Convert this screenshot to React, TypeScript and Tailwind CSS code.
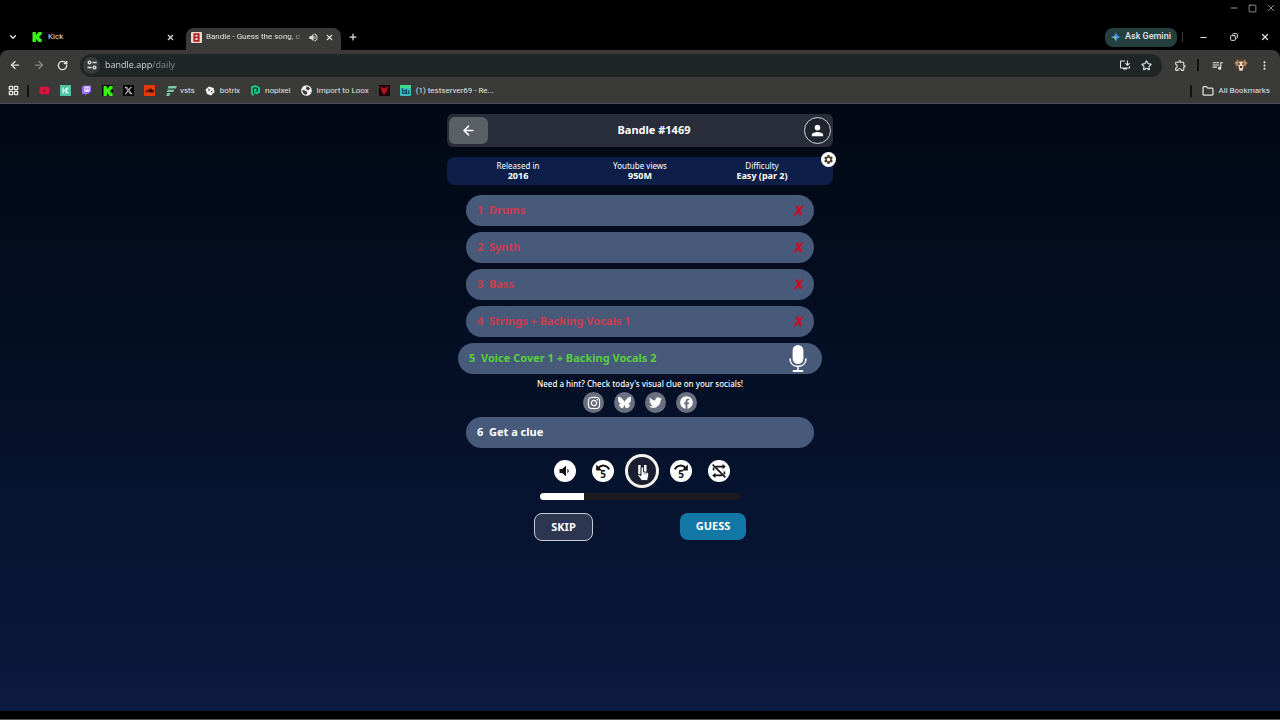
import React from "react";
import {
  ArrowLeft,
  ArrowRight,
  ChevronDown,
  Copy,
  Folder,
  LayoutGrid,
  Minus,
  Plus,
  RotateCw,
  Square,
  Star,
  X,
} from "lucide-react";
import {
  FaFacebook,
  FaInstagram,
  FaSoundcloud,
  FaTwitter,
  FaYoutube,
} from "react-icons/fa";
import { FaBluesky, FaXTwitter } from "react-icons/fa6";
import {
  MdInstallDesktop,
  MdMoreVert,
  MdOutlineExtension,
  MdPerson,
  MdQueueMusic,
  MdSettings,
  MdVolumeUp,
} from "react-icons/md";

const instruments = [
  { number: 1, name: "Drums" },
  { number: 2, name: "Synth" },
  { number: 3, name: "Bass" },
  { number: 4, name: "Strings + Backing Vocals 1" },
];

const facts = [
  { label: "Released in", value: "2016" },
  { label: "Youtube views", value: "950M" },
  { label: "Difficulty", value: "Easy (par 2)" },
];

const socials = [
  { label: "Instagram", icon: <FaInstagram size={14} /> },
  { label: "Bluesky", icon: <FaBluesky size={13} /> },
  { label: "Twitter", icon: <FaTwitter size={13} /> },
  { label: "Facebook", icon: <FaFacebook size={13} /> },
];

const KickLogo: React.FC = () => (
  <svg viewBox="0 0 10 10" className="h-[10px] w-[10px]" fill="#35f512">
    <path d="M0.5 0h3.4v2.4h1.1V1.3h1.1V0h3.6v3.1H8.4v1.1H7.3v1.6h1.1v1.1h1.3V10H6.1V8.7H5V7.6H3.9V10H0.5z" />
  </svg>
);

const BandleLogo: React.FC = () => (
  <svg viewBox="0 0 11 11" className="h-[11px] w-[11px]">
    <rect width="11" height="11" rx="1" fill="#ead9cb" />
    <path d="M2.4 1.2h6.2v8.6H2.4z" fill="#b32525" />
    <path d="M4.5 3h2v1.5h-2zM4.5 6.3h2v1.7h-2z" fill="#fff" />
  </svg>
);

const TuneIcon: React.FC = () => (
  <svg viewBox="0 0 12 12" className="h-[10px] w-[10px]" fill="none" stroke="#e3e3e3" strokeWidth="1.6">
    <path d="M6.6 3h5M0.6 9h5" />
    <circle cx="3" cy="3" r="1.6" />
    <circle cx="9" cy="9" r="1.6" />
  </svg>
);

const GeminiIcon: React.FC = () => (
  <svg viewBox="0 0 10 10" className="h-[10px] w-[10px]">
    <path d="M5 0Q5.6 4.4 10 5Q5.6 5.6 5 10Q4.4 5.6 0 5Q4.4 4.4 5 0" fill="#4f93f5" />
    <path d="M0 5Q4.4 4.4 5 5Q4.6 5.4 5 10Q4.4 5.6 0 5" fill="#8dc39a" />
  </svg>
);

const DogAvatar: React.FC = () => (
  <svg viewBox="0 0 14 14" className="h-[14px] w-[14px]">
    <circle cx="7" cy="6.6" r="6" fill="#59402f" />
    <path d="M0.6 5l3-3.6 1.4 3-2 4zM13.4 5l-3-3.6-1.4 3 2 4z" fill="#b98a5c" />
    <path d="M5.4 3.4h3.2l1 4-1 5.4H5.4l-1-5.4z" fill="#ead9c7" />
    <circle cx="5.2" cy="6" r="0.8" fill="#2a1c14" />
    <circle cx="8.8" cy="6" r="0.8" fill="#2a1c14" />
    <ellipse cx="7" cy="9" rx="1.3" ry="1" fill="#2a1c14" />
  </svg>
);

const VstsLogo: React.FC = () => (
  <svg viewBox="0 0 11 10" className="h-[10px] w-[11px]" fill="#79c9a4">
    <path d="M2.6 0H11L9.8 2.5H1.5zM1.8 3.7h6.6L7.3 6H0.8zM1.2 7.1h3.2L3.2 10H0.2z" />
  </svg>
);

const BotrixLogo: React.FC = () => (
  <svg viewBox="0 0 10 10" className="h-[10px] w-[10px]">
    <path d="M4 0.6L8.6 2l1 4L6 9.6 2 8 0.5 3.6z" fill="#f1f1f1" />
    <path d="M3 2.6l2.2 1.2-1.2 1.8zM5.6 5.4l2-0.8-0.5 2.2z" fill="#3a3a39" />
  </svg>
);

const NopixelLogo: React.FC = () => (
  <svg viewBox="0 0 10 11" className="h-[11px] w-[10px]">
    <path d="M1 1.5L5.5 0 10 2.5v5L6 9.6 5 8 3 11 1 9z" fill="#1fc98c" />
    <path d="M3.4 9V3.4L5.5 2.6l2 1v2L5.4 6.8" fill="none" stroke="#14362c" strokeWidth="1.2" />
  </svg>
);

const EarthIcon: React.FC = () => (
  <svg viewBox="0 0 12 12" className="h-[11px] w-[11px]">
    <circle cx="6" cy="6" r="5.8" fill="#f1f1f1" />
    <path d="M1.6 5.6q2.6-0.4 3.4 1.2l2 0.6-0.8 2.6-1.4 0.6Q1.4 9 1.6 5.6zM6 1.6q2.8 0 4 2.6l-2 1.4-2.8-1z" fill="#3a3a39" />
  </svg>
);

const MicIcon: React.FC = () => (
  <svg viewBox="0 0 18 27" className="h-[27px] w-[18px]" fill="none" stroke="#fff" strokeWidth="1.6">
    <rect x="3.6" y="0" width="10.8" height="19" rx="5.4" fill="#fff" stroke="none" />
    <path d="M1 13.4c0 5 3.4 8 8 8s8-3 8-8M9 21v4.6" />
    <path d="M3.8 26h10.4" strokeWidth="2" />
  </svg>
);

const CrossIcon: React.FC = () => (
  <svg viewBox="0 0 11 11" className="h-[11px] w-[11px]" fill="#d00a20">
    <path d="M2.6 0.8L5 0.4L6.2 3.4L8.8 0.2L10.8 0.4L7.2 5.2L9 9L7 10.4L5.2 7.2L2.2 10.8L0.4 10.2L4.2 5.2z" />
  </svg>
);

const SkipArc: React.FC<{ forward?: boolean }> = ({ forward }) => (
  <svg viewBox="0 0 22 22" className="h-[22px] w-[22px]">
    <g transform={forward ? "translate(22 0) scale(-1 1)" : undefined}>
      <path d="M6.4 7.8C9.4 4.4 14.8 4.8 17.2 9.4" fill="none" stroke="#111" strokeWidth="1.9" />
      <path d="M4.2 4.4v6h6z" fill="#111" />
    </g>
    <text x="11" y="18" textAnchor="middle" fontSize="10" fontWeight="700" fill="#111">
      5
    </text>
  </svg>
);

const NoLoopIcon: React.FC = () => (
  <svg viewBox="0 0 22 22" className="h-[22px] w-[22px]" fill="none" stroke="#111" strokeWidth="1.6">
    <path d="M7.6 6.6h8M5.6 10.4V7.4M6.4 15.4h8M16.4 11.6v3" />
    <path d="M14.6 4l3.2 2.6-3.2 2.6zM7.4 12.8l-3.2 2.6 3.2 2.6z" fill="#111" stroke="none" />
    <path d="M4.6 4.6l12.8 12.8" />
  </svg>
);

// Pause bars with the hand pointer resting on top
const PauseIcon: React.FC = () => (
  <svg viewBox="0 0 30 30" className="h-[30px] w-[30px]">
    <path d="M11 8.6h2.6v10H11zM17.2 8.6h2.6v9h-2.6z" fill="#fff" />
    <path
      d="M14 11.4q1.3-1.6 2.6 0v4.4l4.4 0.8q1.3.6 1.2 2.2l-1.2 6.4h-6.4l-4-5.4q0-2 3.4 0z"
      fill="#fff"
      stroke="#14182b"
      strokeWidth="0.9"
    />
    <path d="M17.4 16.4v2.4M19.4 16.8v2" stroke="#14182b" strokeWidth="0.5" />
  </svg>
);

const roundButton =
  "flex h-[22px] w-[22px] items-center justify-center rounded-full bg-white text-[#111]";

const TabStrip: React.FC = () => (
  <div className="flex h-[34px] items-end text-[8px] text-[#e3e3e3]">
    <button aria-label="Search tabs" className="mb-2 ml-2 w-[10px]">
      <ChevronDown size={10} strokeWidth={3} />
    </button>
    <div className="ml-[14px] flex h-[22px] w-[154px] items-center pb-1">
      <KickLogo />
      <span className="ml-[6px] flex-1">Kick</span>
      <button aria-label="Close Kick" className="mr-[11px]">
        <X size={9} strokeWidth={3} />
      </button>
    </div>
    <div className="flex h-[22px] w-[155px] items-center rounded-t-lg bg-[#3a3a39] pr-[7px] pl-[5px] pb-1">
      <BandleLogo />
      <span className="ml-1 w-[99px] whitespace-nowrap [mask-image:linear-gradient(to_right,#000_84%,transparent)]">
        Bandle - Guess the song, o
      </span>
      <MdVolumeUp size={11} className="ml-[3px]" />
      <button aria-label="Close Bandle" className="ml-auto">
        <X size={9} strokeWidth={3} />
      </button>
    </div>
    <button aria-label="New tab" className="mb-2 ml-[7px]">
      <Plus size={10} strokeWidth={3} />
    </button>
    <div className="mb-[3px] ml-auto flex h-5 items-center">
      <button className="flex h-[19px] w-[72px] items-center justify-center gap-1 rounded-lg bg-[#23403f] text-[9px] font-medium">
        <GeminiIcon />
        Ask Gemini
      </button>
      <span className="mx-[5px] h-[10px] w-px bg-[#3a3a3a]" />
      <button aria-label="Minimize" className="flex w-[31px] justify-center">
        <Minus size={9} strokeWidth={3} />
      </button>
      <button aria-label="Restore" className="flex w-[30px] justify-center">
        <Copy size={8} strokeWidth={3} className="-scale-x-100" />
      </button>
      <button aria-label="Close" className="flex w-[31px] justify-center">
        <X size={10} strokeWidth={3} />
      </button>
    </div>
  </div>
);

const Toolbar: React.FC = () => (
  <div className="flex h-[30px] items-center rounded-t-lg bg-[#3a3a39] pr-[9px] pl-[9px] text-[#e3e3e3]">
    <button aria-label="Back">
      <ArrowLeft size={12} strokeWidth={2.5} />
    </button>
    <button aria-label="Forward" className="ml-3 text-[#8a8a8a]">
      <ArrowRight size={12} strokeWidth={2.5} />
    </button>
    <button aria-label="Reload" className="ml-3">
      <RotateCw size={11} strokeWidth={3} />
    </button>
    <div className="ml-3 flex h-[23px] flex-1 items-center rounded-full bg-[#202525] pr-[10px] pl-[3px]">
      <button
        aria-label="Site information"
        className="flex h-[17px] w-[17px] items-center justify-center rounded-full bg-[#3a3c3c]"
      >
        <TuneIcon />
      </button>
      <input
        aria-label="Address"
        defaultValue="bandle.app/daily"
        className="ml-[5px] min-w-0 flex-1 bg-[linear-gradient(to_right,#e3e3e3_47px,#8b8f8f_47px)] bg-clip-text font-['Open_Sans',sans-serif] text-[9px] text-transparent outline-none"
      />
      <button aria-label="Install app">
        <MdInstallDesktop size={12} />
      </button>
      <button aria-label="Bookmark this page" className="ml-[10px]">
        <Star size={11} strokeWidth={2.5} />
      </button>
    </div>
    <button aria-label="Extensions" className="ml-3">
      <MdOutlineExtension size={13} />
    </button>
    <span className="ml-[10px] h-3 w-[2px] bg-[#111]" />
    <button aria-label="Media" className="ml-3">
      <MdQueueMusic size={13} />
    </button>
    <button aria-label="Profile" className="ml-[10px]">
      <DogAvatar />
    </button>
    <button aria-label="Menu" className="ml-[10px]">
      <MdMoreVert size={13} />
    </button>
  </div>
);

const bookmarkTile = "flex h-[11px] w-[11px] items-center justify-center";

const Bookmarks: React.FC = () => (
  <nav className="flex h-[24px] items-center border-b border-[#4a4e57] bg-[#3a3a39] pr-[10px] pb-[2px] pl-2 text-[8px] whitespace-nowrap text-[#e3e3e3]">
    <button aria-label="Apps">
      <LayoutGrid size={11} strokeWidth={3} />
    </button>
    <span className="ml-2 h-3 w-[2px] bg-[#111]" />
    <div className="ml-[10px] flex items-center gap-[10px]">
      <a href="#youtube" aria-label="YouTube" className={`${bookmarkTile} text-[#e0103c]`}>
        <FaYoutube size={11} />
      </a>
      <a href="#h" aria-label="Bookmark" className={`${bookmarkTile} bg-[#4cc3a5]`}>
        <svg viewBox="0 0 11 11" className="h-[11px] w-[11px]" fill="none" stroke="#c9f3e6" strokeWidth="1.4">
          <path d="M3 2.5v6M3 5.5h2.5M6 3v5.5M8.5 2.5L6 5.5l2.5 3" />
        </svg>
      </a>
      <a href="#twitch" aria-label="Twitch" className={bookmarkTile}>
        <svg viewBox="0 0 11 11" className="h-[11px] w-[11px]">
          <path d="M2.4 0.4H10v6L7.4 9H5.6L4 10.6V9H1V2z" fill="#9a68f5" />
          <path d="M3.4 1.6h5.4v4.2L7.6 7H3.4z" fill="#e9ddff" />
          <path d="M5.2 3v2M7.2 3v2" stroke="#9a68f5" strokeWidth="0.8" />
        </svg>
      </a>
      <a href="#kick" aria-label="Kick" className={`${bookmarkTile} bg-black`}>
        <KickLogo />
      </a>
      <a href="#x" aria-label="X" className={`${bookmarkTile} bg-black`}>
        <FaXTwitter size={9} />
      </a>
      <a href="#soundcloud" aria-label="SoundCloud" className={`${bookmarkTile} bg-[#e23a0c] text-[#2a0d06]`}>
        <FaSoundcloud size={9} />
      </a>
      <a href="#vsts" className="ml-[1px] flex items-center gap-[3px]">
        <VstsLogo />
        vsts
      </a>
      <a href="#botrix" className="flex items-center gap-[5px]">
        <BotrixLogo />
        botrix
      </a>
      <a href="#nopixel" className="flex items-center gap-[5px]">
        <NopixelLogo />
        nopixel
      </a>
      <a href="#loox" className="flex items-center gap-[5px]">
        <EarthIcon />
        Import to Loox
      </a>
      <a href="#red" aria-label="Bookmark" className={`${bookmarkTile} bg-[#1c0508]`}>
        <svg viewBox="0 0 11 11" className="h-[11px] w-[11px]" fill="#b5121f">
          <path d="M1 1l3 2h2l3-2-1 5-3 4-2-3z" />
        </svg>
      </a>
      <a href="#testserver" className="flex items-center gap-[5px]">
        <svg viewBox="0 0 11 11" className="h-[11px] w-[11px]">
          <rect width="11" height="11" rx="1.5" fill="#2fc4c2" />
          <path d="M0 0h11v3H0z" fill="#3fd98c" />
          <path d="M2.5 3v5.5h2.6V5.6H2.5M6.5 4v4.5h2.4V5.2" fill="none" stroke="#134a5c" strokeWidth="1.2" />
        </svg>
        (1) testserver69 - Re...
      </a>
    </div>
    <span className="ml-auto h-3 w-[2px] bg-[#111]" />
    <a href="#bookmarks" className="ml-[10px] flex items-center gap-1">
      <Folder size={12} strokeWidth={2.5} />
      All Bookmarks
    </a>
  </nav>
);

const Player: React.FC = () => (
  <>
    <div className="mt-[6px] flex items-center justify-center gap-4 pl-[3px]">
      <button aria-label="Volume" className={roundButton}>
        <svg viewBox="0 0 12 12" className="h-3 w-3" fill="#111">
          <path d="M0.5 4h2.6L7 0.8v10.4L3.1 8H0.5zM8.4 3.6q2.8 2.4 0 4.8z" />
        </svg>
      </button>
      <button aria-label="Back 5 seconds" className={roundButton}>
        <SkipArc />
      </button>
      <button
        aria-label="Pause"
        className="-mx-[5px] flex h-[34px] w-[34px] items-center justify-center rounded-full border-[3px] border-[#f5f1ec] bg-[#1b1e31]"
      >
        <PauseIcon />
      </button>
      <button aria-label="Forward 5 seconds" className={roundButton}>
        <SkipArc forward />
      </button>
      <button aria-label="Loop off" className={roundButton}>
        <NoLoopIcon />
      </button>
    </div>
    <div
      role="progressbar"
      aria-label="Song position"
      aria-valuenow={22}
      className="mx-auto mt-[5px] h-[7px] w-[200px] overflow-hidden rounded-full bg-[#1d1d1f]"
    >
      <div className="h-full bg-white" style={{ width: "22%" }} />
    </div>
    <div className="mx-auto mt-[13px] flex w-[212px] items-start justify-between text-[11px] font-bold text-white">
      <button className="h-[28px] w-[59px] rounded-lg border border-[#c6cad2] bg-[#2d3650]">SKIP</button>
      <button className="h-[27px] w-[66px] rounded-lg bg-[#1278a5]">GUESS</button>
    </div>
  </>
);

const Game: React.FC = () => (
  <main className="flex-1 bg-linear-to-b from-[#020814] to-[#0b1a3e] pt-[10px] font-['Noto_Sans','DejaVu_Sans',sans-serif]">
    <div className="mx-auto w-full max-w-[386px] text-white">
      <header className="flex h-[33px] items-center rounded-md bg-[#282d39] px-[2px]">
        <button
          aria-label="Back to home"
          className="flex h-[27px] w-[39px] items-center justify-center rounded-md bg-[#5b5f66]"
        >
          <ArrowLeft size={15} strokeWidth={2.5} />
        </button>
        <h1 className="flex-1 pl-4 text-center text-[11px] font-bold">Bandle #1469</h1>
        <button
          aria-label="Account"
          className="flex h-[27px] w-[27px] items-center justify-center rounded-full border border-[#d5d7db] bg-[#20242f]"
        >
          <MdPerson size={17} />
        </button>
      </header>

      <section className="relative mt-[10px] grid h-[28px] grid-cols-3 content-center rounded-lg bg-[#0d1f48] px-[10px] text-center">
        {facts.map((fact) => (
          <div key={fact.label}>
            <p className="text-[8px] leading-[10px]">{fact.label}</p>
            <p className="text-[9px] leading-[10px] font-bold">{fact.value}</p>
          </div>
        ))}
        <button
          aria-label="Settings"
          className="absolute -top-[5px] -right-[3px] flex h-[15px] w-[15px] items-center justify-center rounded-full bg-white text-[#4a3c22]"
        >
          <MdSettings size={11} />
        </button>
      </section>

      <ol className="mt-[10px] flex flex-col items-center gap-[6px] text-[11px] font-bold">
        {instruments.map((row) => (
          <li
            key={row.number}
            className="flex h-[31px] w-[348px] items-center rounded-full bg-[#475a7a] pr-[10px] pl-[11px] text-[#cf3a50]"
          >
            <span className="w-[12px]">{row.number}</span>
            <span className="flex-1">{row.name}</span>
            <CrossIcon />
          </li>
        ))}
        <li className="flex h-[31px] w-[364px] items-center rounded-full bg-[#475a7a] pr-[15px] pl-[11px] text-[#57cf3c]">
          <span className="w-[12px]">5</span>
          <span className="flex-1">Voice Cover 1 + Backing Vocals 2</span>
          <MicIcon />
        </li>
      </ol>

      <p className="mt-1 text-center text-[8px] leading-[12px] font-medium">
        Need a hint? Check today's visual clue on your socials!
      </p>
      <div className="mt-[2px] flex justify-center gap-[10px]">
        {socials.map((social) => (
          <a
            key={social.label}
            href={"#" + social.label.toLowerCase()}
            aria-label={social.label}
            className="flex h-[21px] w-[21px] items-center justify-center rounded-full bg-[#6b7080]"
          >
            {social.icon}
          </a>
        ))}
      </div>
      <button className="mx-auto mt-1 flex h-[31px] w-[348px] items-center rounded-full bg-[#475a7a] px-[11px] text-[11px] font-bold">
        <span className="w-[12px] text-left">6</span>
        <span>Get a clue</span>
      </button>
      <Player />
    </div>
  </main>
);

export default function App() {
  return (
    <div className="flex min-h-screen flex-col bg-black font-['Roboto','Noto_Sans',sans-serif]">
      <div className="flex h-4 items-center justify-end gap-[9px] pr-1 text-[#b5b5b5]">
        <button aria-label="Minimize window">
          <Minus size={10} />
        </button>
        <button aria-label="Maximize window">
          <Square size={9} />
        </button>
        <button aria-label="Close window">
          <X size={10} />
        </button>
      </div>
      <TabStrip />
      <Toolbar />
      <Bookmarks />
      <Game />
      <footer className="h-[9px] border-b border-[#555] bg-black" />
    </div>
  );
}
